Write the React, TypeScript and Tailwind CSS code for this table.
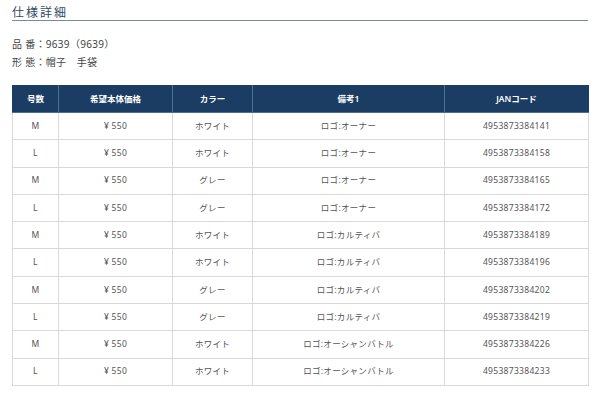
import React from "react";

const rows: [string, string, string, string, string][] = [
  ["M", "¥ 550", "ホワイト", "ロゴ:オーナー", "4953873384141"],
  ["L", "¥ 550", "ホワイト", "ロゴ:オーナー", "4953873384158"],
  ["M", "¥ 550", "グレー", "ロゴ:オーナー", "4953873384165"],
  ["L", "¥ 550", "グレー", "ロゴ:オーナー", "4953873384172"],
  ["M", "¥ 550", "ホワイト", "ロゴ:カルティバ", "4953873384189"],
  ["L", "¥ 550", "ホワイト", "ロゴ:カルティバ", "4953873384196"],
  ["M", "¥ 550", "グレー", "ロゴ:カルティバ", "4953873384202"],
  ["L", "¥ 550", "グレー", "ロゴ:カルティバ", "4953873384219"],
  ["M", "¥ 550", "ホワイト", "ロゴ:オーシャンバトル", "4953873384226"],
  ["L", "¥ 550", "ホワイト", "ロゴ:オーシャンバトル", "4953873384233"],
];

const headers = ["号数", "希望本体価格", "カラー", "備考1", "JANコード"];
const widths = ["w-[46px]", "w-[114px]", "w-[80px]", "w-[192px]", "w-[144px]"];

export default function App() {
  return (
    <div
      className="w-[600px] h-[396px] bg-white overflow-hidden px-[12px]"
      style={{ fontFamily: '"Noto Sans", "Noto Sans CJK JP", sans-serif' }}
    >
      <div className="pt-[6px] pb-[1px] border-b border-[#7d8b99] text-[12px] leading-[13px] tracking-[2px] text-[#2f4a66]">
        仕様詳細
      </div>
      <div className="mt-[14px] text-[10px] leading-[18px] text-[#444] tracking-[0.3px]">
        <div>品 番：9639（9639）</div>
        <div>形 態：帽子　手袋</div>
      </div>
      <table className="mt-[14px] w-[576px] border-collapse table-fixed">
        <thead>
          <tr className="bg-[#1c3d63]">
            {headers.map((h, i) => (
              <th
                key={h}
                className={`${widths[i]} h-[27px] p-0 text-[8.5px] font-semibold text-white text-center border border-[#4f6d8f] border-t-[#1c3d63] ${i === 0 ? "border-l-[#1c3d63]" : ""} ${i === 4 ? "border-r-[#1c3d63]" : ""}`}
              >
                {h}
              </th>
            ))}
          </tr>
        </thead>
        <tbody>
          {rows.map((r, ri) => (
            <tr key={ri}>
              {r.map((c, ci) => (
                <td
                  key={ci}
                  className="h-[27.3px] p-0 text-[8.5px] text-[#555] tracking-[0.3px] text-center border border-[#d9d9d9]"
                >
                  {c}
                </td>
              ))}
            </tr>
          ))}
        </tbody>
      </table>
    </div>
  );
}
